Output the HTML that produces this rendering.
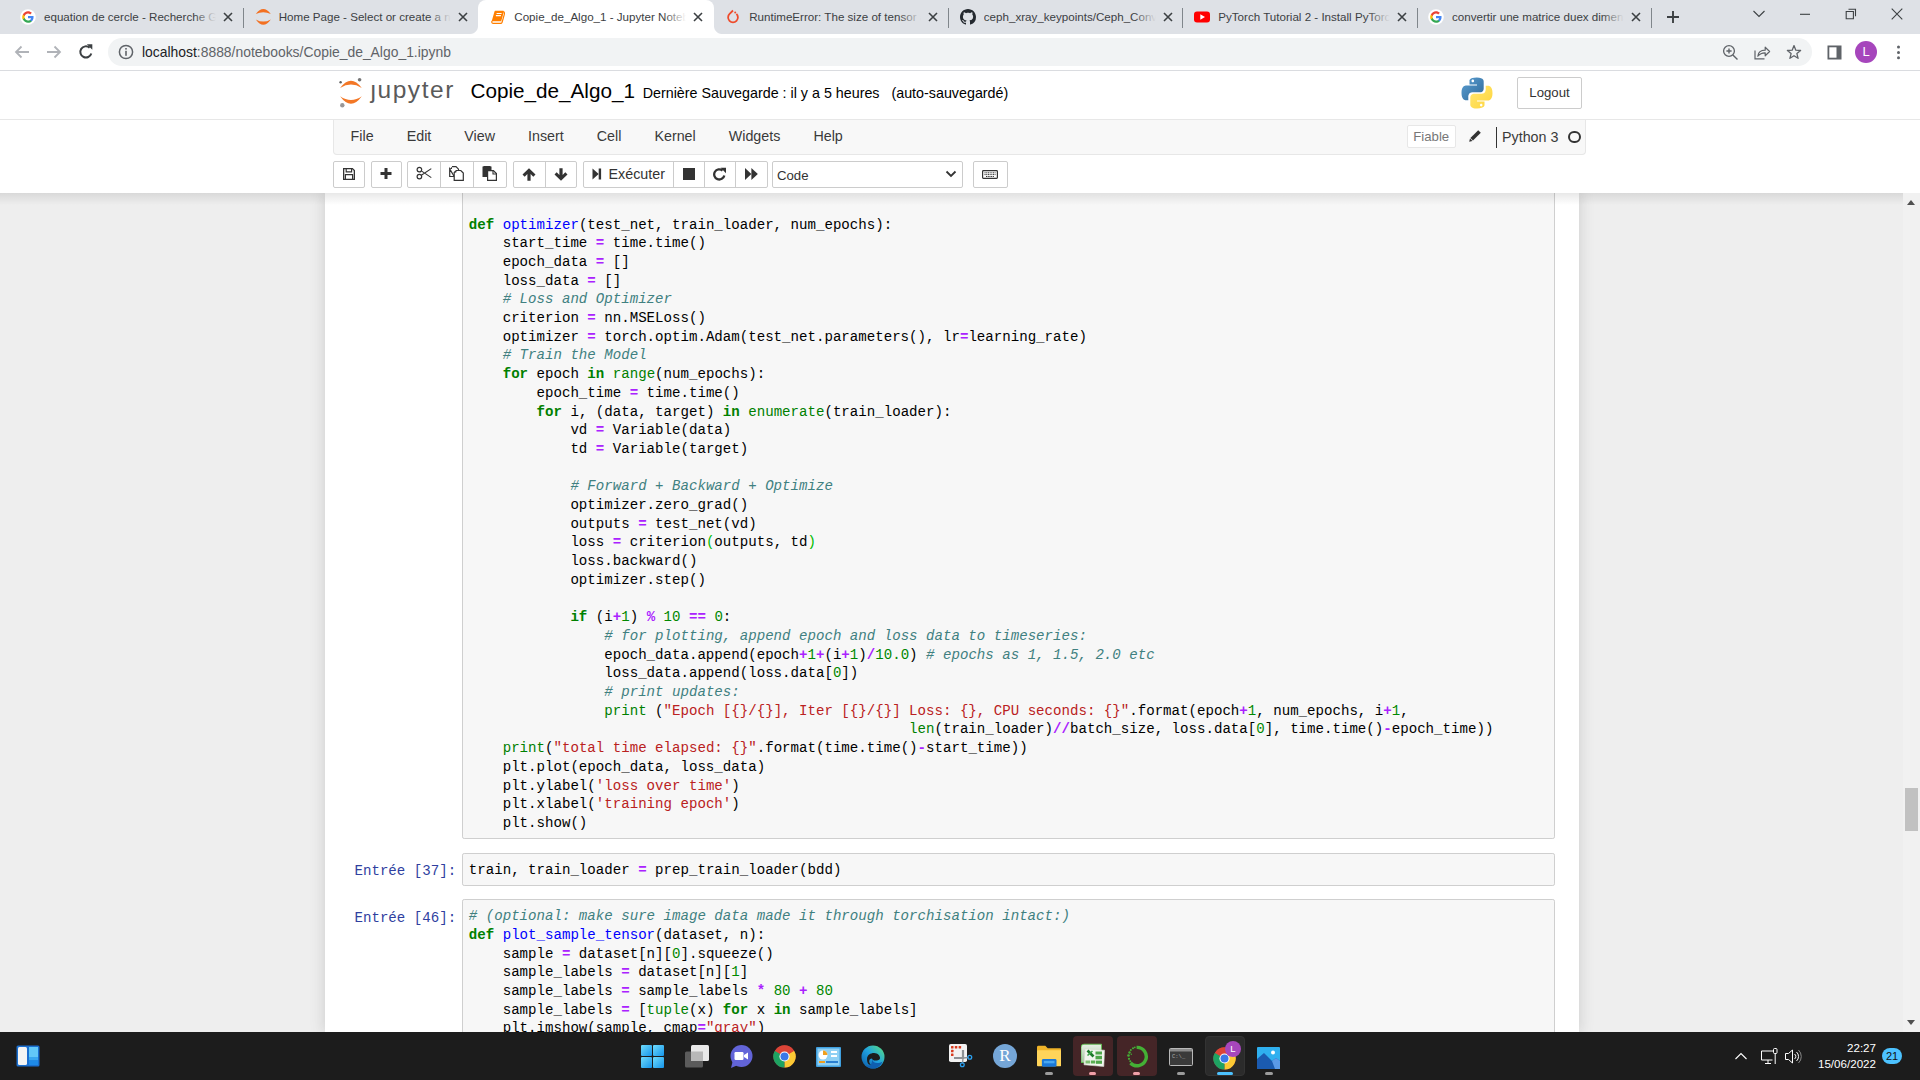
<!DOCTYPE html>
<html><head><meta charset="utf-8">
<style>
*{box-sizing:border-box;margin:0;padding:0}
html,body{width:1920px;height:1080px;overflow:hidden;background:#fff;font-family:"Liberation Sans",sans-serif}
.abs{position:absolute}
#tabstrip{position:absolute;left:0;top:0;width:1920px;height:34px;background:#dee1e6}
.tab{position:absolute;top:0;height:34px;width:236px}
.tab .ttl{position:absolute;left:44px;top:8.8px;font-size:11.6px;color:#3c4043;white-space:nowrap;overflow:hidden;width:172px;height:18px;line-height:16px}
.tab .ttl:after{content:"";position:absolute;right:0;top:0;width:22px;height:18px;background:linear-gradient(to right,rgba(222,225,230,0),#dee1e6)}
.tab.active .ttl:after{background:linear-gradient(to right,rgba(255,255,255,0),#fff)}
.tab .x{position:absolute;left:222px;top:11px;width:12px;height:12px}
.fav{position:absolute}
.tabbg{position:absolute;left:8px;top:0;width:236px;height:34px;background:#fff;border-radius:8px 8px 0 0}
.sep{position:absolute;top:8px;width:1px;height:20px;background:#80868b}
#toolbar{position:absolute;left:0;top:34px;width:1920px;height:36px;background:#fff}
#omni{position:absolute;left:108px;top:4px;width:1704px;height:28px;border-radius:14px;background:#f1f3f4}
#url{position:absolute;left:142px;top:44.3px;font-size:13.9px;color:#5f6368;white-space:nowrap}
#url b{font-weight:normal;color:#202124}
#tbline{position:absolute;left:0;top:70px;width:1920px;height:1px;background:#dadce0}
#jhead{position:absolute;left:0;top:71px;width:1920px;height:122px;background:#fff}
#nbarea{position:absolute;left:0;top:193px;width:1903px;height:839px;background:#eee;overflow:hidden}
#hshadow{position:absolute;left:0;top:193px;width:1920px;height:12px;background:linear-gradient(to bottom,rgba(0,0,0,0.09),rgba(0,0,0,0))}
#container{position:absolute;left:325px;top:0;width:1254px;height:839px;background:#fff;box-shadow:0 0 13px 1px rgba(87,87,87,0.2)}
.ia{position:absolute;left:137px;width:1093px;background:#f7f7f7;border:1.1px solid #cfcfcf;border-radius:2.2px}
pre.code{position:absolute;left:5.8px;font-family:"Liberation Mono",monospace;font-size:14.11px;line-height:18.7px;color:#000;white-space:pre}
.k{color:#008000;font-weight:bold}
.f{color:#0000ff}
.b{color:#008000}
.o{color:#aa22ff;font-weight:bold}
.c{color:#408080;font-style:italic}
.s{color:#ba2121}
.n{color:#080}
.mb{color:#0b0}
.prompt{position:absolute;left:29.5px;font-family:"Liberation Mono",monospace;font-size:14.11px;line-height:18.7px;color:#303f9f;white-space:pre}
#scroll{position:absolute;left:1903px;top:193px;width:17px;height:839px;background:#f1f1f1}
#scroll .up{position:absolute;left:4px;top:7px;width:0;height:0;border-left:4.5px solid transparent;border-right:4.5px solid transparent;border-bottom:5px solid #505050}
#scroll .dn{position:absolute;left:4px;bottom:7px;width:0;height:0;border-left:4.5px solid transparent;border-right:4.5px solid transparent;border-top:5px solid #505050}
#thumb{position:absolute;left:2px;top:595px;width:13px;height:43px;background:#c1c1c1}
#taskbar{position:absolute;left:0;top:1032px;width:1920px;height:48px;background:#1c1c1c}
.menu{position:absolute;top:129px;font-size:14.3px;color:#333}
#menus span{padding:0 16.5px}
.tbtn{position:absolute;top:161px;height:27px;border:1.1px solid #ccc;border-radius:2px;background:#fff}
</style></head><body>
<div id="tabstrip">
  <!-- tab1 -->
  <div class="tab" style="left:0.00px">
    <svg class="fav" style="left:20px;top:9px" width="16" height="16" viewBox="0 0 16 16"><circle cx="8" cy="8" r="7.8" fill="#fff"/>
      <g transform="translate(2.2,2.2) scale(0.483)"><path d="M23.5 12.3c0-.8-.1-1.6-.2-2.3H12v4.4h6.5c-.3 1.5-1.1 2.7-2.4 3.6v3h3.8c2.3-2.1 3.6-5.1 3.6-8.7z" fill="#4285f4"/><path d="M12 24c3.2 0 6-1.1 7.9-2.9l-3.8-3c-1.1.7-2.4 1.2-4.1 1.2-3.1 0-5.8-2.1-6.7-5H1.4v3.1C3.4 21.3 7.4 24 12 24z" fill="#34a853"/><path d="M5.3 14.3c-.2-.7-.4-1.5-.4-2.3s.1-1.6.4-2.3V6.6H1.4C.5 8.2 0 10 0 12s.5 3.8 1.4 5.4l3.9-3.1z" fill="#fbbc05"/><path d="M12 4.8c1.8 0 3.3.6 4.6 1.8l3.4-3.4C17.9 1.2 15.200 0 12 0 7.4 0 3.4 2.700 1.4 6.600l3.900 3.100c.9-2.900 3.600-4.900 6.700-4.900z" fill="#ea4335"/></g></svg>
    <div class="ttl">equation de cercle - Recherche Google</div>
    <svg class="x" style="left:222px" viewBox="0 0 12 12"><path d="M2 2L10 10M10 2L2 10" stroke="#3c4043" stroke-width="1.6"/></svg>
  </div>
  <div class="sep" style="left:243.17px"></div>
  <!-- tab2 -->
  <div class="tab" style="left:234.67px">
    <svg class="fav" style="left:20px;top:9px" width="16" height="16" viewBox="0 0 16 16"><path d="M0.8 5.1 Q8.3 -5 15.8 5.1 Q8.3 1.3 0.8 5.1Z" fill="#f37021"/><path d="M0.8 10.4 Q8.3 21 15.8 10.4 Q8.3 14.8 0.8 10.4Z" fill="#f37021"/></svg>
    <div class="ttl">Home Page - Select or create a notebook</div>
    <svg class="x" style="left:222px" viewBox="0 0 12 12"><path d="M2 2L10 10M10 2L2 10" stroke="#3c4043" stroke-width="1.6"/></svg>
  </div>
  <!-- active tab3 -->
  <div class="tab active" style="left:470.3px">
    <div class="tabbg"></div><div class="abs" style="left:0;top:26px;width:8px;height:8px;background:radial-gradient(circle at 0 0,rgba(255,255,255,0) 7.5px,#fff 8.5px)"></div><div class="abs" style="left:244px;top:26px;width:8px;height:8px;background:radial-gradient(circle at 100% 0,rgba(255,255,255,0) 7.5px,#fff 8.5px)"></div>
    <svg class="fav" style="left:20px;top:9px" width="16" height="16" viewBox="0 0 16 16"><path d="M5.2 1.8H13.2Q14.2 1.8 13.9 2.8L11.2 12.2H1.7L4.5 2.6Q4.7 1.8 5.2 1.8Z" fill="#ff7f00"/><path d="M2 12 Q1.2 14.4 3.4 14.4 H10.6 Q11.7 14.4 12.1 13.2 L14.4 5.2 Q14.8 3.6 13.8 2.6" fill="none" stroke="#ff7f00" stroke-width="1.2"/><path d="M6.6 4.5H11.6M5.9 6.6H10.9" stroke="#fff" stroke-width="1.1"/></svg>
    <div class="ttl">Copie_de_Algo_1 - Jupyter Notebook</div>
    <svg class="x" style="left:222px" viewBox="0 0 12 12"><path d="M2 2L10 10M10 2L2 10" stroke="#3c4043" stroke-width="1.6"/></svg>
  </div>
  <!-- tab4 -->
  <div class="tab" style="left:705.2px">
    <svg class="fav" style="left:20px;top:9px" width="16" height="16" viewBox="0 0 16 16"><path d="M8 1.5 L4.6 4.9 A4.9 4.9 0 1 0 11.4 4.9" fill="none" stroke="#ee4c2c" stroke-width="1.8"/><circle cx="10.2" cy="3.6" r="1" fill="#ee4c2c"/></svg>
    <div class="ttl">RuntimeError: The size of tensor a must match</div>
    <svg class="x" style="left:222px" viewBox="0 0 12 12"><path d="M2 2L10 10M10 2L2 10" stroke="#3c4043" stroke-width="1.6"/></svg>
  </div>
  <div class="sep" style="left:947.68px"></div>
  <!-- tab5 -->
  <div class="tab" style="left:939.8px">
    <svg class="fav" style="left:20px;top:9px" width="16" height="16" viewBox="0 0 16 16"><path fill="#24292f" d="M8 0C3.58 0 0 3.58 0 8c0 3.54 2.29 6.53 5.47 7.59.4.07.55-.17.55-.38 0-.19-.01-.82-.01-1.49-2.01.37-2.53-.49-2.69-.94-.09-.23-.48-.94-.82-1.130-.28-.15-.68-.52-.01-.53.63-.01 1.08.58 1.23.82.72 1.21 1.87.87 2.33.66.07-.52.28-.87.51-1.070-1.78-.2-3.64-.89-3.64-3.950 0-.87.31-1.590.82-2.150-.08-.2-.36-1.020.08-2.120 0 0 .67-.21 2.2.82.64-.18 1.320-.27 2-.27.68 0 1.36.09 2 .27 1.53-1.04 2.2-.82 2.2-.82.44 1.1.16 1.92.08 2.12.51.56.82 1.27.82 2.15 0 3.07-1.87 3.75-3.65 3.95.29.25.54.73.54 1.48 0 1.07-.01 1.93-.01 2.200 0 .21.15.46.55.38A8.013 8.013 0 0016 8c0-4.42-3.58-8-8-8z"/></svg>
    <div class="ttl">ceph_xray_keypoints/Ceph_Conv_net</div>
    <svg class="x" style="left:222px" viewBox="0 0 12 12"><path d="M2 2L10 10M10 2L2 10" stroke="#3c4043" stroke-width="1.6"/></svg>
  </div>
  <div class="sep" style="left:1182.35px"></div>
  <!-- tab6 -->
  <div class="tab" style="left:1174.3px">
    <svg class="fav" style="left:20px;top:9px" width="16" height="16" viewBox="0 0 16 16"><rect x="0" y="2.5" width="16" height="11" rx="3" fill="#f00"/><path d="M6.3 5.2 L11 8 L6.3 10.8Z" fill="#fff"/></svg>
    <div class="ttl">PyTorch Tutorial 2 - Install PyTorch</div>
    <svg class="x" style="left:222px" viewBox="0 0 12 12"><path d="M2 2L10 10M10 2L2 10" stroke="#3c4043" stroke-width="1.6"/></svg>
  </div>
  <div class="sep" style="left:1417.02px"></div>
  <!-- tab7 -->
  <div class="tab" style="left:1408.02px">
    <svg class="fav" style="left:20px;top:9px" width="16" height="16" viewBox="0 0 16 16"><circle cx="8" cy="8" r="7.8" fill="#fff"/>
      <g transform="translate(2.2,2.2) scale(0.483)"><path d="M23.5 12.3c0-.8-.1-1.6-.2-2.3H12v4.4h6.5c-.3 1.5-1.1 2.7-2.4 3.6v3h3.8c2.3-2.1 3.6-5.1 3.6-8.7z" fill="#4285f4"/><path d="M12 24c3.2 0 6-1.1 7.9-2.9l-3.8-3c-1.1.7-2.4 1.2-4.1 1.2-3.1 0-5.8-2.1-6.7-5H1.4v3.1C3.4 21.3 7.4 24 12 24z" fill="#34a853"/><path d="M5.3 14.3c-.2-.7-.4-1.5-.4-2.3s.1-1.6.4-2.3V6.6H1.4C.5 8.2 0 10 0 12s.5 3.8 1.4 5.4l3.9-3.1z" fill="#fbbc05"/><path d="M12 4.8c1.8 0 3.3.6 4.6 1.8l3.4-3.4C17.9 1.2 15.200 0 12 0 7.4 0 3.4 2.700 1.4 6.600l3.900 3.100c.9-2.900 3.600-4.900 6.700-4.900z" fill="#ea4335"/></g></svg>
    <div class="ttl">convertir une matrice duex dimensions</div>
    <svg class="x" style="left:222px" viewBox="0 0 12 12"><path d="M2 2L10 10M10 2L2 10" stroke="#3c4043" stroke-width="1.6"/></svg>
  </div>
  <div class="sep" style="left:1650.5px"></div>
  <svg class="abs" style="left:1666px;top:10px" width="14" height="14" viewBox="0 0 14 14"><path d="M7 1V13M1 7H13" stroke="#3c4043" stroke-width="1.9"/></svg>
  <svg class="abs" style="left:1752px;top:9px" width="14" height="10" viewBox="0 0 14 10"><path d="M1.5 2L7 7.5L12.5 2" fill="none" stroke="#3c4043" stroke-width="1.1"/></svg>
  <svg class="abs" style="left:1799px;top:10px" width="12" height="8" viewBox="0 0 12 8"><path d="M1 4.3H11" stroke="#3c4043" stroke-width="1.1"/></svg>
  <svg class="abs" style="left:1845px;top:8px" width="12" height="12" viewBox="0 0 12 12"><path d="M3.5 1.2H10.5V8.2M1.2 3.5H8.4V10.7H1.2Z" fill="none" stroke="#3c4043" stroke-width="1.1"/></svg>
  <svg class="abs" style="left:1891px;top:8px" width="12" height="12" viewBox="0 0 12 12"><path d="M0.7 0.7L11.3 11.3M11.3 0.7L0.7 11.3" stroke="#3c4043" stroke-width="1.1"/></svg>
</div>
<div id="toolbar">
  <div id="omni"></div>
  <svg class="abs" style="left:12px;top:9px" width="20" height="18" viewBox="0 0 20 18"><path d="M17 9H4M9.5 3.5L4 9L9.5 14.5" fill="none" stroke="#b0b3b8" stroke-width="1.8"/></svg>
  <svg class="abs" style="left:44px;top:9px" width="20" height="18" viewBox="0 0 20 18"><path d="M3 9H16M10.5 3.5L16 9L10.5 14.5" fill="none" stroke="#b0b3b8" stroke-width="1.8"/></svg>
  <svg class="abs" style="left:77px;top:9px" width="18" height="18" viewBox="0 0 18 18"><path d="M14.3 10.5A5.6 5.6 0 1 1 12.6 4.7" fill="none" stroke="#3c4043" stroke-width="2"/><path d="M9.8 1.2H15.3V6.7Z" fill="#3c4043"/></svg>
  <svg class="abs" style="left:118px;top:10px" width="16" height="16" viewBox="0 0 16 16"><circle cx="8" cy="8" r="6.6" fill="none" stroke="#5f6368" stroke-width="1.5"/><rect x="7.2" y="6.8" width="1.6" height="5" fill="#5f6368"/><rect x="7.2" y="4" width="1.6" height="1.6" fill="#5f6368"/></svg>
  <svg class="abs" style="left:1722px;top:10px" width="17" height="17" viewBox="0 0 17 17"><circle cx="7" cy="7" r="5.4" fill="none" stroke="#5f6368" stroke-width="1.3"/><path d="M10.9 10.900L15.5 15.5M7 4.400V9.600M4.400 7H9.600" stroke="#5f6368" stroke-width="1.4"/></svg>
  <svg class="abs" style="left:1754px;top:10px" width="17" height="16" viewBox="0 0 17 16"><path d="M1 6.500V14.800H10.500" fill="none" stroke="#5f6368" stroke-width="1.2"/><path d="M3.8 12.200C4.300 8 7.500 6.200 11.200 6.200V3.200L15.600 7.500L11.200 11.800V8.800C8 8.700 5.800 9.800 3.800 12.200Z" fill="none" stroke="#5f6368" stroke-width="1.2" stroke-linejoin="round"/></svg>
  <svg class="abs" style="left:1786px;top:10px" width="16" height="16" viewBox="0 0 16 16"><path d="M8 1.600L9.800 6.200L14.600 6.500L10.900 9.600L12.100 14.300L8 11.700L3.900 14.300L5.100 9.600L1.400 6.500L6.200 6.200Z" fill="none" stroke="#5f6368" stroke-width="1.3" stroke-linejoin="round"/></svg>
  <svg class="abs" style="left:1826px;top:10px" width="16" height="16" viewBox="0 0 16 16"><rect x="1.500" y="1.500" width="14" height="14" fill="#5f6368"/><rect x="3.300" y="3.300" width="7.200" height="10.400" fill="#fff"/></svg>
  <div class="abs" style="left:1855px;top:7px;width:22px;height:22px;border-radius:50%;background:#a646bc;color:#fff;font-size:13px;line-height:22px;text-align:center">L</div>
  <svg class="abs" style="left:1893px;top:9px" width="10" height="18" viewBox="0 0 10 18"><circle cx="5.500" cy="3.900" r="1.500" fill="#5f6368"/><circle cx="5.500" cy="9.400" r="1.500" fill="#5f6368"/><circle cx="5.500" cy="14.800" r="1.500" fill="#5f6368"/></svg>
</div>
<div id="url"><b>localhost</b>:8888/notebooks/Copie_de_Algo_1.ipynb</div>
<div id="tbline"></div>

<div id="jhead">
  <div class="abs" style="left:0;top:48px;width:1920px;height:1.1px;background:#e7e7e7"></div>
</div>
<svg class="abs" style="left:336px;top:76px" width="30" height="34" viewBox="0 0 30 34">
  <path d="M4.1 11.9 Q15 -2.6 25.8 11.9 Q15 5.0 4.1 11.9Z" fill="#f37726"/>
  <path d="M4.1 20.3 Q15 35.3 25.8 20.3 Q15 27.9 4.1 20.3Z" fill="#f37726"/>
  <circle cx="23.6" cy="3.8" r="1.8" fill="#767677"/>
  <circle cx="4.6" cy="6.2" r="1.2" fill="#616262"/>
  <circle cx="6.3" cy="29.2" r="2.2" fill="#989798"/>
</svg>
<div class="abs" style="left:370.5px;top:75.4px;font-size:24.5px;letter-spacing:1.55px;color:#5a5a5a;line-height:30px">&#x237;upyter</div>
<div class="abs" style="left:470.5px;top:78.8px;font-size:20.7px;color:#000;line-height:24px;white-space:nowrap">Copie_de_Algo_1</div>
<div class="abs" style="left:642.7px;top:82.5px;font-size:14.3px;color:#000;line-height:20px;white-space:nowrap">Dernière Sauvegarde : il y a 5 heures&nbsp;&nbsp;&nbsp;(auto-sauvegardé)</div>
<svg class="abs" style="left:1461px;top:77px" width="32" height="32" viewBox="0 0 32 32">
  <defs><linearGradient id="pyb" x1="0" y1="0" x2="1" y2="1"><stop offset="0" stop-color="#5a9fd4"/><stop offset="1" stop-color="#306998"/></linearGradient>
  <linearGradient id="pyy" x1="0" y1="0" x2="1" y2="1"><stop offset="0" stop-color="#ffe873"/><stop offset="1" stop-color="#ffd43b"/></linearGradient></defs>
  <path d="M15.8 0.5C8 0.5 8.5 3.900 8.5 3.900V7.400H16V8.500H5.400C5.400 8.500 0.500 7.900 0.500 15.800C0.500 23.600 4.800 23.300 4.800 23.300H7.300V19.600C7.300 19.600 7.200 15.300 11.500 15.300H18.600C18.600 15.300 22.700 15.400 22.700 11.400V4.600C22.700 4.600 23.300 0.500 15.800 0.500ZM11.800 2.600C12.500 2.600 13.100 3.200 13.100 3.900C13.100 4.600 12.500 5.200 11.800 5.200C11.100 5.200 10.500 4.600 10.500 3.900C10.500 3.200 11.100 2.600 11.800 2.600Z" fill="url(#pyb)"/>
  <path d="M16.200 31.500C24 31.500 23.500 28.100 23.500 28.100V24.600H16V23.500H26.600C26.600 23.500 31.500 24.100 31.500 16.200C31.500 8.400 27.200 8.700 27.200 8.700H24.700V12.400C24.700 12.400 24.800 16.700 20.500 16.700H13.400C13.400 16.700 9.300 16.600 9.300 20.600V27.400C9.300 27.400 8.700 31.500 16.200 31.500ZM20.200 29.400C19.500 29.400 18.900 28.800 18.900 28.100C18.900 27.400 19.500 26.800 20.200 26.800C20.900 26.800 21.500 27.400 21.500 28.100C21.500 28.800 20.900 29.400 20.200 29.400Z" fill="url(#pyy)"/>
</svg>
<div class="abs" style="left:1517px;top:77px;width:65px;height:31.5px;border:1.1px solid #ccc;border-radius:2px;font-size:13.2px;line-height:29px;text-align:center;color:#333">Logout</div>
<!-- menubar -->
<div class="abs" style="left:332.8px;top:120px;width:1253.7px;height:34.5px;background:#f8f8f8;border:1.1px solid #e7e7e7;border-top:none;border-radius:0 0 4px 4px"></div>
<div class="abs" id="menus" style="left:334.1px;top:119px;height:34px;display:flex;font-size:14.3px;color:#3a3a3a;line-height:34px">
  <span>File</span><span>Edit</span><span>View</span><span>Insert</span><span>Cell</span><span>Kernel</span><span>Widgets</span><span>Help</span>
</div>
<div class="abs" style="left:1407px;top:125px;width:48.5px;height:23px;border:1.1px solid #e7e7e7;background:#fff;border-radius:2px;font-size:13.2px;color:#777;line-height:21px;text-align:center">Fiable</div>
<svg class="abs" style="left:1468px;top:129px" width="14" height="14" viewBox="0 0 14 14"><path d="M10.2 1.2L12.8 3.8L5 11.6L2.4 9Z" fill="#333"/><path d="M2 9.5L4.5 12L1.2 12.8Z" fill="#333"/></svg>
<div class="abs" style="left:1496px;top:127px;width:1.2px;height:21px;background:#333"></div>
<div class="abs" style="left:1502px;top:127px;font-size:14.3px;color:#3a3a3a;line-height:21px">Python 3</div>
<div class="abs" style="left:1568px;top:130.5px;width:12.5px;height:12.5px;border:2px solid #333;border-radius:50%"></div>
<!-- toolbar -->
<div class="tbtn" style="left:333.3px;width:31.5px"></div>
<div class="tbtn" style="left:371.4px;width:30.2px"></div>
<div class="tbtn" style="left:407.4px;width:99.2px"></div>
<div class="abs" style="left:440px;top:162px;width:1.1px;height:25px;background:#ccc"></div>
<div class="abs" style="left:473px;top:162px;width:1.1px;height:25px;background:#ccc"></div>
<div class="tbtn" style="left:513.4px;width:64px"></div>
<div class="abs" style="left:545px;top:162px;width:1.1px;height:25px;background:#ccc"></div>
<div class="tbtn" style="left:583px;width:184.5px"></div>
<div class="abs" style="left:673.3px;top:162px;width:1.1px;height:25px;background:#ccc"></div>
<div class="abs" style="left:704px;top:162px;width:1.1px;height:25px;background:#ccc"></div>
<div class="abs" style="left:735px;top:162px;width:1.1px;height:25px;background:#ccc"></div>
<div class="tbtn" style="left:772px;width:190.5px"></div>
<div class="abs" style="left:777px;top:166.8px;font-size:13.2px;color:#333;line-height:18px">Code</div>
<svg class="abs" style="left:945px;top:169px" width="12" height="10" viewBox="0 0 12 10"><path d="M1.5 2.5L6 7L10.5 2.5" fill="none" stroke="#333" stroke-width="1.8"/></svg>
<div class="tbtn" style="left:973px;width:34.5px"></div>
<!-- toolbar icons -->
<svg class="abs" style="left:343px;top:168px" width="12" height="12" viewBox="0 0 12 12"><path d="M0.65 0.65H9.4L11.35 2.6V11.35H0.65Z" fill="none" stroke="#333" stroke-width="1.3"/><path d="M3.2 0.65V3.9H8.6V0.65" fill="none" stroke="#333" stroke-width="1.2"/><path d="M2.4 11.35V6.6H9.6V11.35" fill="none" stroke="#333" stroke-width="1.2"/></svg>
<svg class="abs" style="left:380px;top:168px" width="12" height="11" viewBox="0 0 12 11"><path d="M6 0V11M0.5 5.5H11.5" stroke="#333" stroke-width="3"/></svg>
<svg class="abs" style="left:416px;top:166px" width="16" height="14" viewBox="0 0 16 14"><circle cx="3.4" cy="3.6" r="2.3" fill="none" stroke="#333" stroke-width="1.2"/><circle cx="3.4" cy="10.6" r="2.3" fill="none" stroke="#333" stroke-width="1.2"/><path d="M5.3 4.9L15.3 11.6M5.3 9.3L15.3 2.6" stroke="#333" stroke-width="1.1"/></svg>
<svg class="abs" style="left:449px;top:166px" width="16" height="15" viewBox="0 0 16 15"><path d="M3 0.7H7L9.5 3.2V4.5M5.2 10.5H0.7V3Z" fill="none" stroke="#333" stroke-width="1.2"/><path d="M3 0.7L0.7 3H3Z" fill="#333"/><path d="M7.3 4.5H11.8L14.3 7V14.3H5.2V6.6Z" fill="#fff" stroke="#333" stroke-width="1.2"/><path d="M7.3 4.5L5.2 6.6H7.3Z" fill="#333"/></svg>
<svg class="abs" style="left:482px;top:166px" width="16" height="15" viewBox="0 0 16 15"><path d="M0.5 0.5H9.5V4.5H5V11H0.5Z" fill="#333"/><rect x="1.5" y="0" width="7" height="1.5" fill="#333"/><path d="M5.6 4.6H11.4L14.4 7.6V14.4H5.6Z" fill="#fff" stroke="#333" stroke-width="1.2"/><path d="M11 4.6V8H14.4" fill="none" stroke="#333" stroke-width="1.1"/></svg>
<svg class="abs" style="left:522px;top:168px" width="14" height="13" viewBox="0 0 14 13"><path d="M7 0.3L13.5 6.6L11.3 8.8L8.6 6.1V12.7H5.4V6.1L2.7 8.8L0.5 6.6Z" fill="#333"/></svg>
<svg class="abs" style="left:554px;top:168px" width="14" height="13" viewBox="0 0 14 13"><path d="M7 12.7L13.5 6.4L11.3 4.2L8.6 6.9V0.3H5.4V6.9L2.7 4.2L0.5 6.4Z" fill="#333"/></svg>
<svg class="abs" style="left:592px;top:168px" width="10" height="12" viewBox="0 0 10 12"><path d="M0.5 0.5V11.5L6.7 6Z" fill="#333"/><rect x="6.7" y="0.5" width="2.4" height="11" fill="#333"/></svg>
<div class="abs" style="left:608.5px;top:164px;font-size:14.3px;color:#333;line-height:20px">Exécuter</div>
<div class="abs" style="left:683px;top:168px;width:12px;height:12px;background:#333"></div>
<svg class="abs" style="left:712px;top:167px" width="15" height="14" viewBox="0 0 15 14"><path d="M12.3 8.4A5.1 5.1 0 1 1 10.6 3.5" fill="none" stroke="#333" stroke-width="2.3"/><path d="M8.6 0.8H14V6.2Z" fill="#333"/></svg>
<svg class="abs" style="left:745px;top:168px" width="13" height="12" viewBox="0 0 13 12"><path d="M0 0V12L6.4 6Z" fill="#333"/><path d="M6.4 0V12L12.8 6Z" fill="#333"/></svg>
<svg class="abs" style="left:982px;top:170px" width="16" height="9" viewBox="0 0 16 9"><rect x="0.6" y="0.6" width="14.8" height="7.8" rx="0.8" fill="none" stroke="#333" stroke-width="1.2"/><path d="M2.5 2.8H13.5M2.5 4.6H13.5M4 6.5H12" stroke="#333" stroke-width="1" stroke-dasharray="1.1 0.6"/></svg>


<div id="nbarea">
  <div id="container">
    <div class="ia" style="top:-100px;height:745.5px">
      <pre class="code" style="top:121.5px"><span class="k">def</span> <span class="f">optimizer</span>(test_net, train_loader, num_epochs):
    start_time <span class="o">=</span> time.time()
    epoch_data <span class="o">=</span> []
    loss_data <span class="o">=</span> []
    <span class="c"># Loss and Optimizer</span>
    criterion <span class="o">=</span> nn.MSELoss()
    optimizer <span class="o">=</span> torch.optim.Adam(test_net.parameters(), lr<span class="o">=</span>learning_rate)
    <span class="c"># Train the Model</span>
    <span class="k">for</span> epoch <span class="k">in</span> <span class="b">range</span>(num_epochs):
        epoch_time <span class="o">=</span> time.time()
        <span class="k">for</span> i, (data, target) <span class="k">in</span> <span class="b">enumerate</span>(train_loader):
            vd <span class="o">=</span> Variable(data)
            td <span class="o">=</span> Variable(target)

            <span class="c"># Forward + Backward + Optimize</span>
            optimizer.zero_grad()
            outputs <span class="o">=</span> test_net(vd)
            loss <span class="o">=</span> criterion<span class="mb">(</span>outputs, td<span class="mb">)</span>
            loss.backward()
            optimizer.step()

            <span class="k">if</span> (i<span class="o">+</span><span class="n">1</span>) <span class="o">%</span> <span class="n">10</span> <span class="o">==</span> <span class="n">0</span>:
                <span class="c"># for plotting, append epoch and loss data to timeseries:</span>
                epoch_data.append(epoch<span class="o">+</span><span class="n">1</span><span class="o">+</span>(i<span class="o">+</span><span class="n">1</span>)<span class="o">/</span><span class="n">10.0</span>) <span class="c"># epochs as 1, 1.5, 2.0 etc</span>
                loss_data.append(loss.data[<span class="n">0</span>])
                <span class="c"># print updates:</span>
                <span class="b">print</span> (<span class="s">&quot;Epoch [{}/{}], Iter [{}/{}] Loss: {}, CPU seconds: {}&quot;</span>.format(epoch<span class="o">+</span><span class="n">1</span>, num_epochs, i<span class="o">+</span><span class="n">1</span>,
                                                    <span class="b">len</span>(train_loader)<span class="o">//</span>batch_size, loss.data[<span class="n">0</span>], time.time()<span class="o">-</span>epoch_time))
    <span class="b">print</span>(<span class="s">&quot;total time elapsed: {}&quot;</span>.format(time.time()<span class="o">-</span>start_time))
    plt.plot(epoch_data, loss_data)
    plt.ylabel(<span class="s">&#x27;loss over time&#x27;</span>)
    plt.xlabel(<span class="s">&#x27;training epoch&#x27;</span>)
    plt.show()</pre>
    </div>
    <div class="prompt" style="top:668.5px">Entrée [37]:</div>
    <div class="ia" style="top:659.5px;height:33px">
      <pre class="code" style="top:7px">train, train_loader <span class="o">=</span> prep_train_loader(bdd)</pre>
    </div>
    <div class="prompt" style="top:715.5px">Entrée [46]:</div>
    <div class="ia" style="top:705.8px;height:200px">
      <pre class="code" style="top:7.4px"><span class="c"># (optional: make sure image data made it through torchisation intact:)</span>
<span class="k">def</span> <span class="f">plot_sample_tensor</span>(dataset, n):
    sample <span class="o">=</span> dataset[n][<span class="n">0</span>].squeeze()
    sample_labels <span class="o">=</span> dataset[n][<span class="n">1</span>]
    sample_labels <span class="o">=</span> sample_labels <span class="o">*</span> <span class="n">80</span> <span class="o">+</span> <span class="n">80</span>
    sample_labels <span class="o">=</span> [<span class="b">tuple</span>(x) <span class="k">for</span> x <span class="k">in</span> sample_labels]
    plt.imshow(sample, cmap<span class="o">=</span><span class="s">&quot;gray&quot;</span>)
    </pre>
    </div>
  </div>
</div>
<div id="hshadow"></div>
<div id="scroll"><div class="up"></div><div id="thumb"></div><div class="dn"></div></div>
<div id="taskbar">
  <!-- widgets -->
  <svg class="abs" style="left:16px;top:13px" width="24" height="22" viewBox="0 0 24 22"><rect x="0.5" y="0.5" width="23" height="21" rx="1.5" fill="#1a6fd0"/><rect x="2" y="2" width="9" height="18" rx="1.5" fill="#f4f4f4"/><rect x="13" y="2" width="9" height="10" fill="#62c8f8"/><rect x="13" y="12" width="9" height="3.5" fill="#38a7f0"/><rect x="13" y="15.5" width="9" height="4.5" fill="#1e8ae8"/></svg>
  <!-- start -->
  <svg class="abs" style="left:641px;top:13px" width="23" height="23" viewBox="0 0 23 23"><defs><linearGradient id="win" x1="0" y1="0" x2="1" y2="1"><stop offset="0" stop-color="#6fdcfc"/><stop offset="1" stop-color="#1594ea"/></linearGradient></defs><rect x="0" y="0" width="11" height="11" rx="1" fill="url(#win)"/><rect x="12" y="0" width="11" height="11" rx="1" fill="url(#win)"/><rect x="0" y="12" width="11" height="11" rx="1" fill="url(#win)"/><rect x="12" y="12" width="11" height="11" rx="1" fill="url(#win)"/></svg>
  <!-- task view -->
  <svg class="abs" style="left:685px;top:13px" width="25" height="23" viewBox="0 0 25 23"><rect x="0" y="6.5" width="18" height="16" rx="1.5" fill="#5b5b5b"/><rect x="6" y="0" width="18" height="16" rx="1.5" fill="#e9e9e9"/><rect x="6" y="6.5" width="12" height="9.5" fill="#b8b8b8"/></svg>
  <!-- chat -->
  <svg class="abs" style="left:729px;top:13px" width="24" height="23" viewBox="0 0 24 23"><circle cx="12.5" cy="11" r="11" fill="#6264d8"/><path d="M2 23L4 15L9 20Z" fill="#6264d8"/><rect x="5.5" y="7" width="9" height="8" rx="1.2" fill="#fff"/><path d="M15 10L19 7.5V14.5L15 12Z" fill="#fff"/></svg>
  <!-- chrome -->
  <svg class="abs" style="left:773px;top:13px" width="23" height="23" viewBox="0 0 24 24"><circle cx="12" cy="12" r="11.5" fill="#db4437"/><path d="M12 12L22 6A11.5 11.5 0 0 1 12 23.5Z" fill="#fcc934"/><path d="M12 12L12 23.5A11.5 11.5 0 0 1 2 6Z" fill="#1ea362"/><path d="M12 12L2 6A11.5 11.5 0 0 1 22 6Z" fill="#db4437"/><circle cx="12" cy="12" r="5.3" fill="#fff"/><circle cx="12" cy="12" r="4.2" fill="#3b78e7"/></svg>
  <!-- control panel like -->
  <svg class="abs" style="left:816px;top:15px" width="25" height="20" viewBox="0 0 25 20"><rect x="0" y="0" width="25" height="20" rx="1" fill="#3fa0e0"/><rect x="1.5" y="1.5" width="22" height="17" fill="#8fd0f4"/><circle cx="7" cy="8" r="4.5" fill="#fff"/><path d="M7 8V3.5A4.5 4.5 0 0 1 11.5 8Z" fill="#f0a020"/><rect x="3" y="14" width="6" height="2" fill="#f0a020"/><rect x="10" y="14" width="12" height="2" fill="#2a7fd0"/><rect x="15" y="4" width="6" height="2" fill="#fff"/><rect x="15" y="8" width="6" height="2" fill="#fff"/></svg>
  <!-- edge -->
  <svg class="abs" style="left:861px;top:13px" width="24" height="24" viewBox="0 0 24 24"><defs><linearGradient id="edg" x1="0" y1="1" x2="1" y2="0"><stop offset="0" stop-color="#0c59a4"/><stop offset="0.5" stop-color="#1fa0e0"/><stop offset="1" stop-color="#5ce37a"/></linearGradient></defs><circle cx="12" cy="12" r="11.5" fill="url(#edg)"/><path d="M6 14C6 10 9.5 8 13 8C17 8 19 11 19 13C19 15 16.5 15.5 14.5 15.5C13 15.500 11 15 11 13.500C8 13.5 7 17 10 20C7 20 6 17 6 14Z" fill="#1c1c1c"/><path d="M11 13.5C11 16 13 18 16 18C18 18 20 17.500 21.500 16.500C20 20.500 16.500 23.500 12 23.500C9 23.500 6.500 22 5 20C8 21.500 11.500 20.500 11 13.5Z" fill="#0f5fb0"/></svg>
  <!-- snipping -->
  <svg class="abs" style="left:949px;top:12px" width="25" height="25" viewBox="0 0 25 25"><rect x="0" y="0" width="18" height="18" rx="1.8" fill="#f2f2f2"/><rect x="2" y="2" width="2.5" height="2.5" rx="0.5" fill="#d83b1f"/><rect x="5.8" y="2" width="2.5" height="2.5" rx="0.5" fill="#d83b1f"/><rect x="9.6" y="2" width="2.5" height="2.5" rx="0.5" fill="#d83b1f"/><rect x="2" y="5.8" width="2.5" height="2.5" rx="0.5" fill="#d83b1f"/><rect x="2" y="9.6" width="2.5" height="2.5" rx="0.5" fill="#d83b1f"/><path d="M14 6V14H5" fill="none" stroke="#8e9296" stroke-width="2.2"/><path d="M14 14L19.5 13.500M14 14L13.500 19.500" stroke="#8e9296" stroke-width="1.4"/><circle cx="20.800" cy="13.300" r="1.900" fill="none" stroke="#2aa0f0" stroke-width="1.3"/><circle cx="13.300" cy="20.800" r="1.900" fill="none" stroke="#2aa0f0" stroke-width="1.3"/></svg>
  <!-- R -->
  <div class="abs" style="left:993px;top:12px;width:24px;height:24px;border-radius:50%;background:#75a6d7;color:#fff;font-family:'Liberation Serif',serif;font-size:17px;line-height:24px;text-align:center">R</div>
  <!-- explorer -->
  <svg class="abs" style="left:1037px;top:13px" width="24.4" height="22" viewBox="0 0 25 22"><path d="M0 2A1.5 1.5 0 0 1 1.5 0.5H8.500L11 3H23.500A1.5 1.5 0 0 1 25 4.500V20.500H0Z" fill="#f0b429"/><rect x="0" y="5" width="25" height="16.5" rx="1" fill="#ffd45a"/><rect x="5" y="14" width="15" height="8" rx="1.5" fill="#1a78d8"/><rect x="7" y="16" width="11" height="2.5" fill="#4aa8f0"/></svg>
  <div class="abs" style="left:1045px;top:40px;width:8px;height:3px;border-radius:2px;background:#9b9b9b"></div>
  <!-- excel -->
  <div class="abs" style="left:1073px;top:4px;width:40px;height:40px;border-radius:4px;background:#452527"></div>
  <svg class="abs" style="left:1081px;top:11px" width="25" height="24" viewBox="0 0 25 24"><defs><linearGradient id="xlb" x1="0" y1="0" x2="0" y2="1"><stop offset="0" stop-color="#e8efe6"/><stop offset="1" stop-color="#9fc59a"/></linearGradient></defs><path d="M3 1.2H20.5V19.5H0V4.2Q0 1.2 3 1.2Z" fill="url(#xlb)" stroke="#5ec24f" stroke-width="0.9"/><path d="M4 6L23.5 7.2L22.8 23.5L3 21.8Z" fill="#f2f5ee" stroke="#d9dcd0" stroke-width="0.6"/><path d="M6.5 7.5L12.5 13.500" stroke="#1d7a2a" stroke-width="2.6"/><path d="M11.5 8L6.5 12.5" stroke="#3ea548" stroke-width="1.6"/><rect x="14.5" y="8.5" width="6.5" height="3" fill="#4fa64a"/><rect x="14.5" y="12.800" width="6.5" height="3.5" fill="#4fa64a"/><rect x="4.5" y="17.500" width="4.5" height="3" fill="#7fbf73"/><rect x="9.800" y="17.500" width="4.5" height="3" fill="#5caf52"/><rect x="15" y="17.600" width="6" height="3.200" fill="#4fa64a"/></svg>
  <div class="abs" style="left:1089px;top:40px;width:7px;height:3px;border-radius:2px;background:#f0a0a8"></div>
  <!-- anaconda -->
  <div class="abs" style="left:1117px;top:4px;width:40px;height:40px;border-radius:4px;background:#452527"></div>
  <svg class="abs" style="left:1125px;top:12px" width="24" height="24" viewBox="0 0 24 24"><path d="M11.6 3.4A9.2 9.2 0 1 1 5.5 19" fill="none" stroke="#44b035" stroke-width="3.4"/><circle cx="4.500" cy="8.500" r="1.200" fill="#44b035"/><circle cx="3.500" cy="11.5" r="1.300" fill="#44b035"/><circle cx="4" cy="14.800" r="1.100" fill="#44b035"/><circle cx="5.800" cy="6" r="1" fill="#44b035"/><circle cx="8" cy="4.300" r="1" fill="#44b035"/><circle cx="9.800" cy="3.300" r="0.900" fill="#44b035"/><circle cx="5.300" cy="17.300" r="1" fill="#44b035"/><circle cx="6.300" cy="10.300" r="0.700" fill="#44b035"/></svg>
  <div class="abs" style="left:1133px;top:40px;width:7px;height:3px;border-radius:2px;background:#f0a0a8"></div>
  <!-- cmd -->
  <svg class="abs" style="left:1169px;top:16px" width="24" height="18" viewBox="0 0 24 18"><rect x="0.5" y="0.5" width="23" height="17" rx="1" fill="#3a3a3a" stroke="#b8b8b8" stroke-width="1"/><rect x="1" y="1" width="22" height="2.5" fill="#8c8c8c"/><text x="3" y="10" font-size="5.5" fill="#aaa" font-family="Liberation Mono">C:\_</text></svg>
  <div class="abs" style="left:1177px;top:40px;width:8px;height:3px;border-radius:2px;background:#9b9b9b"></div>
  <!-- chrome active -->
  <div class="abs" style="left:1205px;top:4px;width:40px;height:40px;border-radius:4px;background:#2b2b2b;border:1px solid #333"></div>
  <svg class="abs" style="left:1213px;top:15px" width="23" height="23" viewBox="0 0 24 24"><circle cx="12" cy="12" r="11.5" fill="#db4437"/><path d="M12 12L22 6A11.5 11.5 0 0 1 12 23.5Z" fill="#fcc934"/><path d="M12 12L12 23.5A11.5 11.5 0 0 1 2 6Z" fill="#1ea362"/><path d="M12 12L2 6A11.5 11.5 0 0 1 22 6Z" fill="#db4437"/><circle cx="12" cy="12" r="5.3" fill="#fff"/><circle cx="12" cy="12" r="4.2" fill="#3b78e7"/></svg>
  <div class="abs" style="left:1225px;top:9px;width:16px;height:16px;border-radius:50%;background:#a646bc;color:#fff;font-size:9.5px;line-height:16px;text-align:center">L</div>
  <div class="abs" style="left:1217px;top:40px;width:16px;height:3px;border-radius:2px;background:#4cc2ff"></div>
  <!-- photos -->
  <svg class="abs" style="left:1257px;top:15px" width="23" height="22" viewBox="0 0 23 22"><rect x="0" y="0" width="23" height="22" rx="1" fill="#2fb0ef"/><path d="M0 22V12L7 6L15 14L19 11L23 14V22Z" fill="#1b5bb0"/><path d="M15 14L19 11L23 14V22H18Z" fill="#5b9ae8"/><circle cx="16" cy="5.5" r="2" fill="#fff"/></svg>
  <div class="abs" style="left:1265px;top:40px;width:8px;height:3px;border-radius:2px;background:#9b9b9b"></div>
  <!-- tray -->
  <svg class="abs" style="left:1735px;top:20px" width="12" height="8" viewBox="0 0 12 8"><path d="M0.5 7L6 1.5L11.5 7" fill="none" stroke="#fff" stroke-width="1.1"/></svg>
  <svg class="abs" style="left:1761px;top:16px" width="17" height="17" viewBox="0 0 17 17"><path d="M12 3H0.5V12H11.5M4 15.5H10M7 12V15.5" fill="none" stroke="#fff" stroke-width="1"/><rect x="12.500" y="0.500" width="3.500" height="5" rx="1" fill="none" stroke="#fff" stroke-width="1"/><path d="M14.2 5.5V16" stroke="#fff" stroke-width="1"/></svg>
  <svg class="abs" style="left:1785px;top:17px" width="17" height="15" viewBox="0 0 17 15"><path d="M0.5 4.5H3.5L7.5 1V14L3.5 10.5H0.5Z" fill="none" stroke="#fff" stroke-width="1"/><path d="M9.5 5A3 3 0 0 1 9.5 10M11.5 3A6 6 0 0 1 11.5 12" fill="none" stroke="#fff" stroke-width="1"/><path d="M13.5 1A9 9 0 0 1 13.5 14" fill="none" stroke="#888" stroke-width="1"/></svg>
  <div class="abs" style="left:1800px;top:8px;width:76px;text-align:right;color:#fff;font-size:11.6px;line-height:16px">22:27<br>15/06/2022</div>
  <div class="abs" style="left:1882px;top:16px;width:20px;height:16px;border-radius:8px;background:#4cc2ff;color:#111;font-size:11px;line-height:16px;text-align:center">21</div>
</div>

</body></html>
